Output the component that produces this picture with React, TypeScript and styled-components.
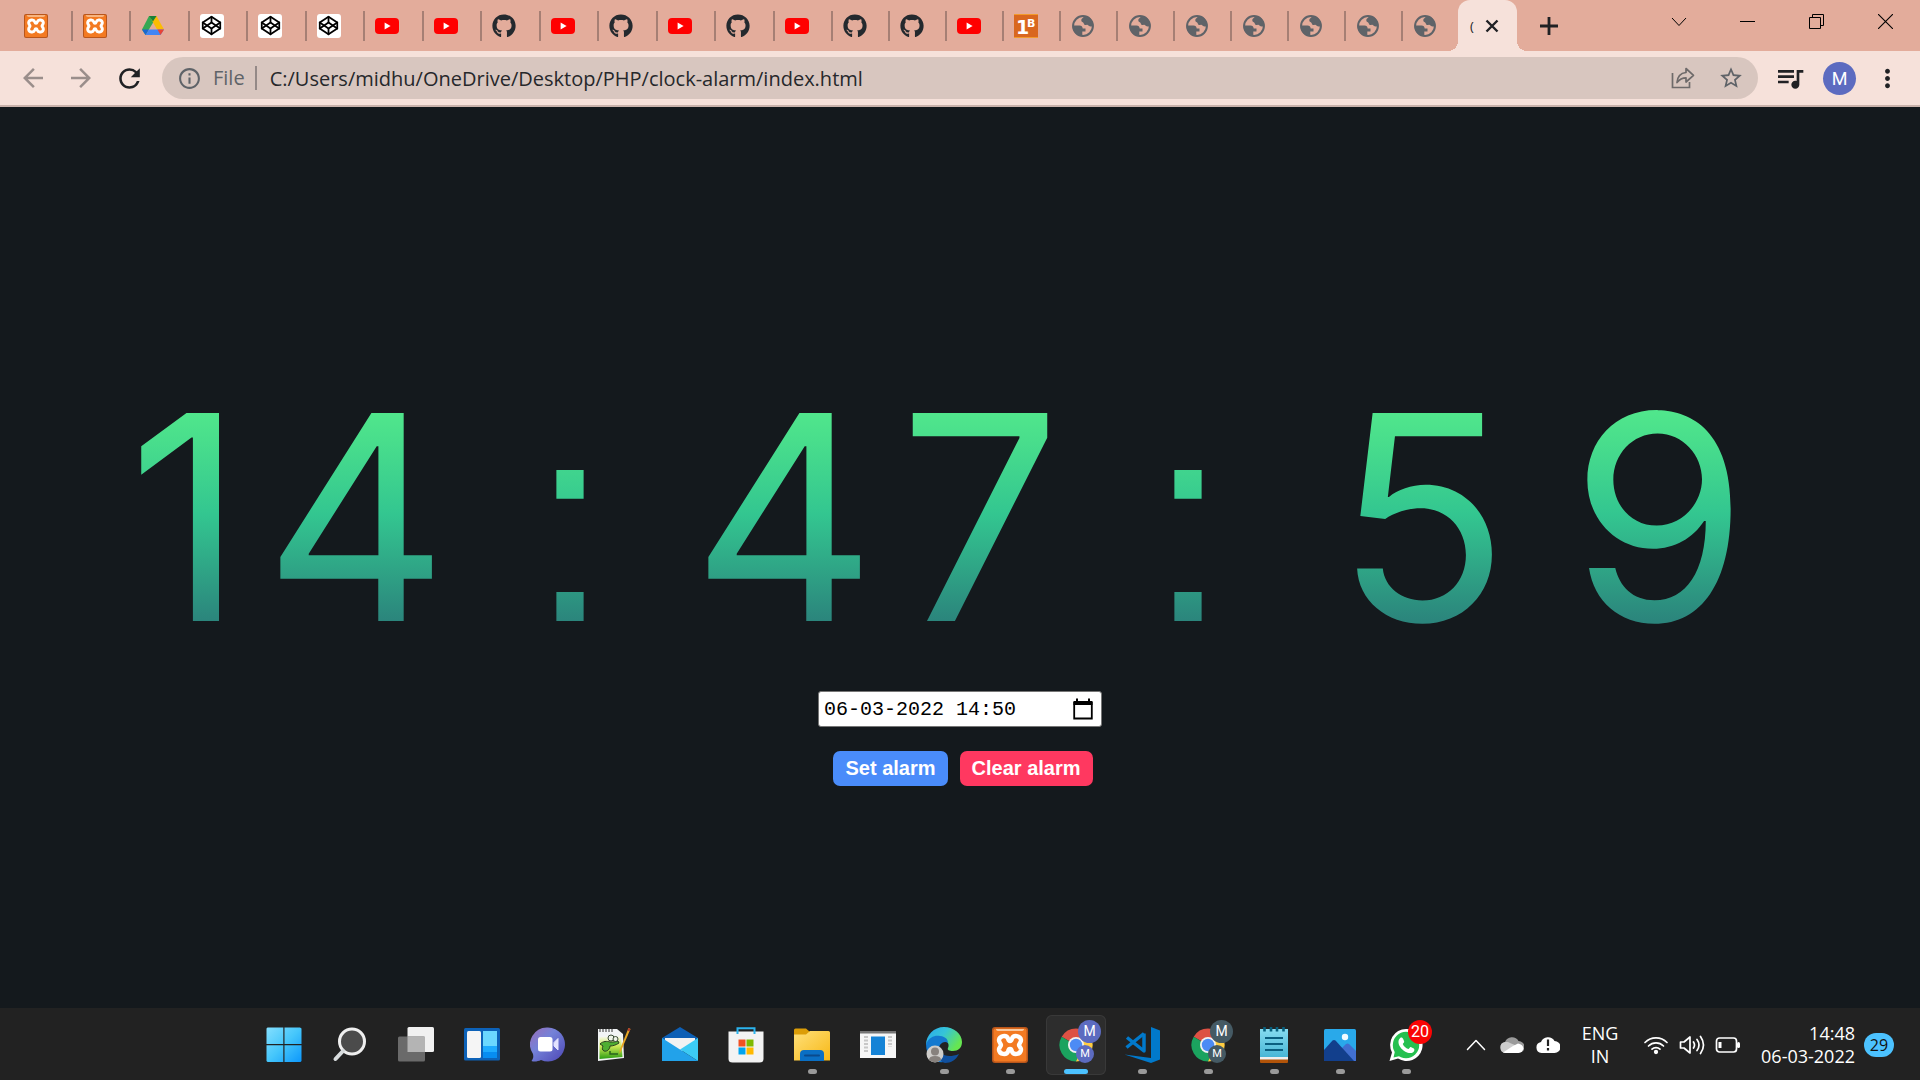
import React from "react";
import styled, { createGlobalStyle, css } from "styled-components";
import { FaGithub } from "react-icons/fa";
import { FiCodepen } from "react-icons/fi";
import { MdArrowBack, MdArrowForward, MdInfoOutline, MdMoreVert, MdRefresh, MdStarOutline, MdQueueMusic } from "react-icons/md";

const uiFont = '"Open Sans", "Noto Sans", sans-serif';

const GlobalStyle = createGlobalStyle`
  *, *::before, *::after { box-sizing: border-box; }
  body { margin: 0; background: #14191d; }
  button, input { font: inherit; color: inherit; border: 0; margin: 0; padding: 0; background: none; }
  svg { display: block; }
`;

const Screen = styled.div`
  min-height: 100vh;
  display: flex;
  flex-direction: column;
  font-family: ${uiFont};
`;

/* ---------- tab strip ---------- */

const TabStrip = styled.nav`
  height: 51px;
  display: flex;
  background: #e3ac9b;
`;

const Tab = styled.button`
  width: 57px;
  height: 51px;
  display: flex;
  align-items: center;
  &::before {
    content: "";
    width: 2px;
    height: 30px;
    margin-right: 10px;
    background: #a67f74;
  }
`;

const FirstTab = styled(Tab)`
  width: 71px;
  padding-left: 24px;
  &::before { display: none; }
`;

const WideTabs = styled.div`
  flex: 0 1 760px;
  display: flex;
  ${Tab} { flex: 1; }
`;

const ActiveTab = styled.div`
  position: relative;
  width: 59px;
  height: 51px;
  display: flex;
  align-items: center;
  gap: 11px;
  padding-left: 12px;
  border-radius: 12px 12px 0 0;
  background: #f6e1da;
  color: #202124;
  &::before, &::after {
    content: "";
    position: absolute;
    bottom: 0;
    width: 10px;
    height: 10px;
  }
  &::before {
    right: 100%;
    background: radial-gradient(circle at 0 0, transparent 10px, #f6e1da 10px);
  }
  &::after {
    left: 100%;
    background: radial-gradient(circle at 100% 0, transparent 10px, #f6e1da 10px);
  }
`;

const TabTitle = styled.span`
  font-size: 13px;
  line-height: 24px;
`;

const PlainButton = styled.button`
  display: flex;
  align-items: center;
  justify-content: center;
`;

const NewTab = styled(PlainButton)`
  width: 46px;
  margin-left: 9px;
  color: #202124;
`;

const WindowControls = styled.div`
  display: flex;
  height: 43px;
  margin-left: auto;
`;

const Caption = styled(PlainButton)`
  width: 69px;
`;

/* ---------- toolbar ---------- */

const Toolbar = styled.header`
  height: 56px;
  display: flex;
  align-items: center;
  padding-left: 9px;
  padding-right: 9px;
  background: #f6e1da;
  border-bottom: 2px solid #c9b2ab;
  color: #202124;
`;

const ToolButton = styled(PlainButton)<{ $dim?: boolean }>`
  width: 48px;
  height: 42px;
  color: ${(p) => (p.$dim ? "#9a8e8b" : "#202124")};
`;

const AddressBar = styled.div`
  flex: 1;
  height: 42px;
  display: flex;
  align-items: center;
  margin-left: 9px;
  margin-right: 8px;
  padding-left: 15px;
  padding-right: 3px;
  border-radius: 21px;
  background: #d8c6bf;
  color: #5f6368;
`;

const Scheme = styled.label`
  margin-left: 11px;
  padding-right: 10px;
  font-size: 20px;
  line-height: 24px;
  border-right: 2px solid #948987;
`;

const Url = styled.input`
  flex: 1;
  min-width: 0;
  margin-left: 13px;
  height: 32px;
  font-size: 20px;
  color: #26282b;
`;

const Avatar = styled.button`
  width: 33px;
  height: 33px;
  margin: 0 7px 0 9px;
  border-radius: 50%;
  background: #5c6bc0;
  color: #fff;
  font-family: Roboto, sans-serif;
  font-size: 18px;
  line-height: 33px;
`;

/* ---------- alarm page ---------- */

const Main = styled.main`
  flex: 1;
  display: flex;
  flex-direction: column;
  align-items: center;
  justify-content: center;
  padding-top: 40px;
`;

const Clock = styled.h1`
  margin: 0;
  padding-right: 28px;
  display: flex;
  align-items: baseline;
  font-family: Inter, "DejaVu Sans", sans-serif;
  font-weight: 400;
  font-size: 286px;
  line-height: 296px;
  color: transparent;
  background: linear-gradient(180deg, #50e68c 15%, #49de8c 24%, #33c690 49%, #2b857c 85%);
  background-clip: text;
  -webkit-background-clip: text;
`;

const Glyph = styled.span<{ $advance: number }>`
  width: ${(p) => p.$advance}px;
  display: flex;
  justify-content: center;
`;

const Separator = styled(Glyph)`
  font-family: "Liberation Sans", Arial, sans-serif;
  line-height: 200px;
`;

const AlarmField = styled.div`
  width: 284px;
  height: 36px;
  display: flex;
  align-items: center;
  margin-top: 26px;
  padding: 0 8px 0 5px;
  border: 1px solid #767676;
  border-radius: 3px;
  background: #fff;
`;

const AlarmInput = styled.input`
  flex: 1;
  min-width: 0;
  font-family: "Liberation Mono", monospace;
  font-size: 20px;
  color: #000;
`;

const Actions = styled.div`
  display: flex;
  gap: 6px;
  margin-top: 24px;
`;

const ActionButton = styled.button<{ $color: string }>`
  height: 35px;
  margin-left: 6px;
  padding: 0 12px;
  border-radius: 7px;
  background: ${(p) => p.$color};
  color: #fff;
  font-family: "Liberation Sans", Arial, sans-serif;
  font-weight: 700;
  font-size: 20px;
`;

/* ---------- taskbar ---------- */

const Taskbar = styled.footer`
  height: 72px;
  display: flex;
  align-items: center;
  justify-content: flex-end;
  padding-top: 2px;
  padding-right: 26px;
  background: #222222;
  color: #fff;
`;

const Apps = styled.div`
  display: flex;
  gap: 6px;
`;

const AppButton = styled.button<{ $state?: "open" | "active" }>`
  position: relative;
  width: 60px;
  height: 60px;
  display: flex;
  align-items: center;
  justify-content: center;
  border-radius: 6px;
  ${(p) =>
    p.$state === "active" &&
    css`
      background: #2d2d2d;
      box-shadow: inset 0 0 0 1px #393939;
    `}
  ${(p) =>
    p.$state &&
    css`
      &::after {
        content: "";
        position: absolute;
        bottom: 1px;
        left: 50%;
        width: ${p.$state === "active" ? 24 : 9}px;
        height: 5px;
        margin-left: ${p.$state === "active" ? -12 : -4}px;
        border-radius: 3px;
        background: ${p.$state === "active" ? "#4cc2ff" : "#9a9a9a"};
      }
    `}
`;

const Badge = styled.span<{ $size: number; $top: number; $left: number; $color: string; $text: number }>`
  position: absolute;
  top: ${(p) => p.$top}px;
  left: ${(p) => p.$left}px;
  width: ${(p) => p.$size}px;
  height: ${(p) => p.$size}px;
  border-radius: 50%;
  background: ${(p) => p.$color};
  color: #fff;
  font-family: Roboto, sans-serif;
  font-size: ${(p) => p.$text}px;
  line-height: ${(p) => p.$size}px;
  text-align: center;
`;

const Tray = styled.div`
  display: flex;
  align-items: center;
  margin-left: 22px;
  font-size: 18px;
  line-height: 23px;
`;

const TrayButton = styled(PlainButton)`
  width: 36px;
  height: 48px;
`;

const Language = styled.button`
  width: 72px;
  padding-right: 4px;
  text-align: center;
`;

const DateTime = styled.button`
  width: 109px;
  text-align: right;
`;

const StackedLine = styled.span`
  display: block;
`;

const Count = styled.span`
  width: 30px;
  height: 24px;
  margin-left: 9px;
  border-radius: 12px;
  background: #4cc2ff;
  color: #111;
  text-align: center;
  font-size: 16px;
  line-height: 24px;
`;

/* ---------- drawings ---------- */

const Xampp = ({ size }: { size: number }) => (
  <svg width={size} height={size} viewBox="0 0 36 36">
    <rect width="36" height="36" rx="3" fill="#b9561b" />
    <rect x="1.500" y="1.500" width="33" height="33" rx="2" fill="#f37a22" />
    <path d="M4 2h28q0 2-3 2H7Q4 4 4 2Z" fill="#f9c9a0" />
    <path
      d="M18 14C16.500 14 16.500 13 16 11.500 14.500 7.500 7.500 8.500 7 13c-.2 2.500 2 3.500 2 5s-2.200 2.500-2 5c.5 4.500 7.500 5.500 9 1.500.5-1.500.5-2.500 2-2.500s1.500 1 2 2.500c1.500 4 8.500 3 9-1.500.2-2.500-2-3.500-2-5s2.200-2.500 2-5c-.5-4.500-7.500-5.500-9-1.500-.5 1.500-.5 2.500-2 2.500Z"
      fill="none" stroke="#fff" strokeWidth="4.400" strokeLinejoin="round"
    />
  </svg>
);

const Drive = () => (
  <svg width="24" height="24" viewBox="0 0 24 24">
    <path d="M8 2h4l2 3.500L4.500 21 1 15.500Z" fill="#34a853" />
    <path d="M15.500 2 23 15.500h-7L8.500 2Z" fill="#fbbc04" />
    <path d="M8 2h7.500L12 7.500Z" fill="#188038" />
    <path d="M8 15.500h15L19.500 21H4.500Z" fill="#4285f4" />
    <path d="M1 15.500h6.800L4.500 21Z" fill="#1967d2" />
    <path d="M16.500 15.500H23L19.500 21Z" fill="#ea4335" />
  </svg>
);

const CodepenTile = styled.span`
  width: 24px;
  height: 24px;
  display: flex;
  align-items: center;
  justify-content: center;
  border-radius: 3px;
  background: #fff;
  color: #000;
`;

const Codepen = () => (
  <CodepenTile><FiCodepen size={21} strokeWidth={2} /></CodepenTile>
);

const YouTube = () => (
  <svg width="24" height="24" viewBox="0 0 24 24">
    <rect y="4" width="24" height="16" rx="4" fill="#f00" />
    <path d="M9.600 8.500v7l6-3.500Z" fill="#fff" />
  </svg>
);

const GitHub = () => <FaGithub size={24} color="#24292e" />;

const OneB = () => (
  <svg width="24" height="24" viewBox="0 0 24 24">
    <rect width="24" height="24" fill="#d9671f" />
    <path d="M0 .5h24M0 23.500h24" stroke="#f39a2a" />
    <text x="2" y="19.500" fontFamily="DejaVu Sans" fontWeight="700" fontSize="19" fill="#fff">1</text>
    <text x="13" y="13" fontFamily="DejaVu Sans" fontWeight="700" fontSize="11" fill="#fff">B</text>
  </svg>
);

const Globe = () => (
  <svg width="24" height="24" viewBox="0 0 24 24">
    <circle cx="12" cy="12" r="9.900" fill="none" stroke="#5f6368" strokeWidth="2" />
    <path d="M13 2c-.7 2.500-2.700 2-2.700 4.500 0 1.800 2 1.200 2.500 3 .4 1.600 1.700 1.700 3 1.300 1.300-.4 2 1.700 4 1.700h2.500C22.500 6 18 1.500 13 2Z" fill="#5f6368" />
    <path d="M1.500 11.500h7c2 0 3 1.300 3.200 3h2.800v3h-3.200v4.800C5.500 22 1.500 17.500 1.500 11.500Z" fill="#5f6368" />
  </svg>
);

const Share = () => (
  <svg width="24" height="24" viewBox="0 0 24 24" fill="none" stroke="#6e6a6a" strokeWidth="1.700">
    <path d="M1.500 7v14.500h17V16" />
    <path d="M6 16.500C6.500 10.500 10 7 15 6.500V2.500l7.500 6.800L15 16v-4.200c-4 0-6.500 1.500-9 4.700Z" strokeLinejoin="round" />
  </svg>
);

const WindowsLogo = () => (
  <svg width="36" height="36" viewBox="0 0 36 36">
    <defs>
      <linearGradient id="win" x1="0" y1="0" x2="36" y2="36" gradientUnits="userSpaceOnUse">
        <stop stopColor="#86e0ff" /><stop offset=".5" stopColor="#45c6fb" /><stop offset="1" stopColor="#0a95fb" />
      </linearGradient>
    </defs>
    <path fill="url(#win)" d="M1.500 .5h15.800v16.500H.5V1.500ZM18.500 .5H34l1.500 1v15.500h-17ZM.5 18.300h16.800V35H1.500l-1-1ZM18.500 18.300h17V34l-1 1h-16Z" />
  </svg>
);

const Search = () => (
  <svg width="36" height="36" viewBox="0 0 36 36">
    <circle cx="20" cy="14.500" r="12.500" fill="#4b4b4b" stroke="#efefef" strokeWidth="3" />
    <path d="m11 24-7.500 8" stroke="#d8dcde" strokeWidth="4" strokeLinecap="round" />
  </svg>
);

const TaskView = () => (
  <svg width="36" height="36" viewBox="0 0 36 36">
    <rect x="9.500" y="0" width="26.500" height="25" rx="1.500" fill="#f1f1f1" />
    <rect x="0" y="9.500" width="27" height="25" rx="1.500" fill="#6a6a6a" />
    <path d="M9.500 9.500H27V25H9.500Z" fill="#b4b4b4" />
  </svg>
);

const Widgets = () => (
  <svg width="36" height="36" viewBox="0 0 36 36">
    <rect y="1" width="36" height="32.500" rx="1.500" fill="#0d62b8" />
    <rect x="3" y="4" width="14" height="27" rx="1.500" fill="#f5f5f5" />
    <path d="M19 4h14v15H19Z" fill="#6bd8ff" />
    <path d="M19 19h14v6H19Z" fill="#1eabff" />
    <path d="M19 25h14v6H19Z" fill="#078df2" />
  </svg>
);

const Chat = () => (
  <svg width="36" height="36" viewBox="0 0 36 36">
    <defs>
      <linearGradient id="chat" x1="0" y1="0" x2="1" y2="1">
        <stop stopColor="#9a6cb8" /><stop offset=".4" stopColor="#7482d8" /><stop offset="1" stopColor="#4d46b5" />
      </linearGradient>
    </defs>
    <path d="M18 .5a17 17 0 1 1-7 32.500C8 34.500 4 35 1.500 34c2-2.500 2-4.500 1.500-7A17 17 0 0 1 18 .5Z" fill="url(#chat)" />
    <rect x="8" y="10" width="14.500" height="14.500" rx="2.500" fill="#fff" />
    <path d="m24 15.500 4-4v11.500l-4-4Z" fill="#e4e4ff" stroke="#e4e4ff" strokeLinejoin="round" />
  </svg>
);

const NotepadPlus = () => (
  <svg width="36" height="36" viewBox="0 0 36 36">
    <defs>
      <linearGradient id="npp" x1="0" y1="0" x2="0" y2="1">
        <stop stopColor="#f8f8f2" /><stop offset=".45" stopColor="#cdea55" /><stop offset="1" stopColor="#2b9c13" />
      </linearGradient>
    </defs>
    <path d="M2 2h19l6 5 1 24L2 34Z" fill="#f2f4f5" />
    <path d="M3.500 10 25 9l1.500 21-23 2Z" fill="url(#npp)" />
    <path d="M4 2v3m3-3v3m3-3v3m3-3v3m3-3v3" stroke="#333" strokeWidth="1" />
    <path d="M4 17c3-3 7-3 10-2 3 0 6 0 8-1l1 2c-3 2-6 3-9 3 0 3-3 6-6 5-2-1-2-3-1-5-1-1-2-1-3-2Z" fill="#4fae32" stroke="#29421e" />
    <circle cx="15" cy="11" r="3" fill="#eef3e8" stroke="#3a4b35" />
    <circle cx="19.500" cy="12" r="2.500" fill="#eef3e8" stroke="#3a4b35" />
    <path d="M14 24v3h8" fill="none" stroke="#29621e" strokeWidth="1.500" />
    <path d="M34.500 2 25 24l-1.500 3 .2-4L32.500 1Z" fill="#e8a623" />
    <path d="m32.500 1 2 1-1 2.500-2-1Z" fill="#b33a2c" />
  </svg>
);

const Mail = () => (
  <svg width="36" height="36" viewBox="0 0 36 36">
    <path d="M0 11 18 0l18 11v6H0Z" fill="#0d5fb5" />
    <path d="M3 11h30v9L18 25 3 20Z" fill="#f2f2f2" />
    <path d="M36 11 18 22.500 36 34Z" fill="#3ccbf4" />
    <path d="M0 11 36 34H0Z" fill="#22a2ea" />
  </svg>
);

const Store = () => (
  <svg width="36" height="36" viewBox="0 0 36 36">
    <path d="M.5 4.500h35V32q0 3.500-4 3.500H4.500q-4 0-4-3.500Z" fill="#f3f3f3" />
    <path d="M9.500 7V1.300h17V7" fill="none" stroke="#2bb4ee" strokeWidth="2" />
    <path d="M10.500 12.500h7v7h-7Z" fill="#f25022" />
    <path d="M18.500 12.500h7v7h-7Z" fill="#7fba00" />
    <path d="M10.500 20.500h7v7h-7Z" fill="#00a4ef" />
    <path d="M18.500 20.500h7v7h-7Z" fill="#ffb900" />
  </svg>
);

const Explorer = () => (
  <svg width="36" height="36" viewBox="0 0 36 36">
    <defs>
      <linearGradient id="folder" x1="0" y1="0" x2="1" y2="1">
        <stop stopColor="#ffe07a" /><stop offset="1" stopColor="#f7b816" />
      </linearGradient>
    </defs>
    <path d="M0 3q0-1.500 1.500-1.500H12L16 5v6H0Z" fill="#dc9d07" />
    <path d="M0 7.500h12L16 4h18.500Q36 4 36 5.500v28H0Z" fill="url(#folder)" />
    <path d="M6 34V27q0-4 4-4h16q4 0 4 4v7Z" fill="#0a6fc4" />
    <path d="M11 28.500h14" stroke="#0a4a8c" strokeWidth="2" strokeLinecap="round" />
  </svg>
);

const RunWindow = () => (
  <svg width="36" height="36" viewBox="0 0 36 36">
    <path d="M0 4h36v27H0Z" fill="#f6f6f6" />
    <path d="M0 4h36v2.500H0Z" fill="#757575" />
    <rect x="11" y="9.500" width="14" height="18.500" fill="#1583d6" />
    <path d="M6 9v17M30 9v11" stroke="#c8c8c8" strokeWidth="4" strokeDasharray="2 1.500" />
  </svg>
);

const Edge = () => (
  <svg width="36" height="36" viewBox="0 0 36 36">
    <defs>
      <linearGradient id="edge" x1="0" y1="0" x2="1" y2=".5">
        <stop stopColor="#2aa7ee" /><stop offset=".5" stopColor="#35c4d8" /><stop offset="1" stopColor="#66e651" />
      </linearGradient>
    </defs>
    <path d="M0 18C0 8 8 0 18 0s18 7 18 15c0 6-4 9-9 9-4 0-6-1-5-3 2-4-1-8-6-8-7 0-13 5-16 5Z" fill="url(#edge)" />
    <path d="M0 17C3 10 9 8 14 9c6 .5 8 4 8 7-4-3-10 1-9 8 1 6 6 9 12 8-9 7-25 3-25-15Z" fill="#1479cf" />
    <path d="M13 20c0 7 7 12 20 7-3 6-8 9-14 9-8-2-10-11-6-16Z" fill="#10509f" />
    <circle cx="9" cy="27" r="8.500" fill="#cfcdca" />
    <circle cx="9" cy="24.500" r="4" fill="#87817d" />
    <path d="M3 33q0-4 6-4t6 4q-6 4.500-12 0Z" fill="#87817d" />
  </svg>
);

const Chrome = () => (
  <svg width="36" height="36" viewBox="0 0 36 36">
    <path d="M18 18 3.700 9.700A16.500 16.500 0 0 1 32.300 9.700L18 18Z" fill="#dd5144" />
    <path d="M18 18 32.300 9.700A16.500 16.500 0 0 1 18 34.500Z" fill="#ffcd42" />
    <path d="M3.700 9.700A16.500 16.500 0 0 0 18 34.500L24 22Z" fill="#1ba35f" />
    <circle cx="18" cy="18" r="8" fill="#f1f1f1" />
    <circle cx="18" cy="18" r="6.200" fill="#4c8bf5" />
  </svg>
);

const VsCode = () => (
  <svg width="36" height="36" viewBox="0 0 36 36">
    <path d="m27 0 9 3.500v29L27 36 .5 27.500 27 31Z" fill="#0179cb" />
    <path d="M20 6.500v17.500L3 10.500" fill="none" stroke="#0179cb" strokeWidth="3.500" strokeLinejoin="round" />
    <path d="M20 6.500 2.500 20.500" fill="none" stroke="#0179cb" strokeWidth="3.500" />
  </svg>
);

const Notepad = () => (
  <svg width="36" height="36" viewBox="0 0 36 36">
    <defs>
      <linearGradient id="pad" x1="0" y1="0" x2="0" y2="1">
        <stop stopColor="#86dcf0" /><stop offset="1" stopColor="#49b6d6" />
      </linearGradient>
    </defs>
    <rect x="4" y="28" width="28" height="8" rx="1" fill="#b25409" />
    <path d="M4 28h28v4.500H4Z" fill="#eee" />
    <path d="M4 2h28v28H4Z" fill="url(#pad)" />
    <path d="M8.500 0v4.500m6.500-4.500v4.500M21 0v4.500M27.500 0v4.500" stroke="#075f7d" strokeWidth="2.600" />
    <path d="M9 11h18M9 17h18M9 23h18" stroke="#0a5f80" strokeWidth="2" />
  </svg>
);

const Photos = () => (
  <svg width="36" height="36" viewBox="0 0 36 36">
    <rect x="2" y="2" width="32" height="32" rx="1.500" fill="#29a9ea" />
    <path d="m18 23 6-6q1.500-1 3 0l7 7v10H18Z" fill="#416fd0" />
    <path d="m2 23 8.500-9.500q1.500-1 3 0L32 34H2Z" fill="#123f8c" />
    <circle cx="23" cy="10" r="3.200" fill="#f1fbff" />
  </svg>
);

const WhatsApp = () => (
  <svg width="36" height="36" viewBox="0 0 36 36">
    <path d="M18 2a16 16 0 1 1-8 29.500L1.500 34 4 25.500A16 16 0 0 1 18 2Z" fill="#fff" />
    <circle cx="18" cy="18" r="13.200" fill="#25c04f" />
    <path d="M7 24 5.500 30.500 12 29Z" fill="#25c04f" />
    <path d="M11 12.500c1.500-3 3.500-2.500 4.200-.5l1 2.500c.2 1-1.400 2-1.400 2.500 1 2.500 3 4 5.500 5 .7.100 1.700-2.200 2.500-2l3 1.400c1 .6.800 3-1 4.100C18.500 28.500 8 19 11 12.500Z" fill="#fff" />
  </svg>
);

const Cloud = ({ alert }: { alert?: boolean }) => (
  <svg width="24" height="18" viewBox="0 0 24 18">
    <path d="M5.500 17a5.500 5.500 0 0 1-.5-10.900A7.500 7.500 0 0 1 18.500 5 6 6 0 0 1 18.500 17Z" fill={alert ? "#fff" : "#9b9b9b"} />
    {alert ? (
      <path d="M12 3.500v6.500m0 2v2.500" stroke="#222" strokeWidth="2.200" />
    ) : (
      <>
        <path d="M5.500 17A5.500 5.500 0 0 1 5 6.100c2-.5 4 0 5.500 1.200L20 11l-8 6Z" fill="#cecece" />
        <path d="M3 16.500 13 10l5-2.500c7 1 7 8.500.5 9.500h-13Z" fill="#fff" />
      </>
    )}
  </svg>
);

const lines = { fill: "none", stroke: "#fff", strokeWidth: 1.7, strokeLinecap: "round" as const, strokeLinejoin: "round" as const };

const Wifi = () => (
  <svg width="26" height="20" viewBox="0 0 26 20" {...lines}>
    <path d="M2 7.500a15.500 15.500 0 0 1 22 0M5.500 11a10.600 10.600 0 0 1 15 0M9 14.200a5.700 5.700 0 0 1 8 0" />
    <circle cx="13" cy="17" r="1.300" fill="#fff" />
  </svg>
);

const Speaker = () => (
  <svg width="26" height="22" viewBox="0 0 26 22" {...lines}>
    <path d="M1.500 8H5l6-5v16l-6-5H1.500ZM14.500 8q2 3 0 6M18 5.500q4 5.500 0 11M21.500 2.500q6 8.500 0 17" />
  </svg>
);

const Battery = () => (
  <svg width="26" height="20" viewBox="0 0 26 20" {...lines}>
    <rect x="1.500" y="3" width="20" height="14" rx="3" />
    <path d="M5 7v6" strokeWidth="3" strokeLinecap="butt" />
    <path d="M23.500 8.500v3" strokeWidth="3" />
  </svg>
);

const Calendar = () => (
  <svg width="20" height="22" viewBox="0 0 20 22">
    <path d="M1.200 5h17.600v15.500H1.200Z" fill="none" stroke="#000" strokeWidth="1.800" />
    <path d="M.5 3h19v4H.5ZM3 .5h2V4H3ZM15 .5h2V4h-2Z" fill="#000" />
  </svg>
);

/* ---------- data ---------- */

const favicons = {
  drive: <Drive />,
  codepen: <Codepen />,
  xampp: <Xampp size={24} />,
  youtube: <YouTube />,
  github: <GitHub />,
  oneb: <OneB />,
  globe: <Globe />,
};
type Site = keyof typeof favicons;

const wideTabs: Site[] = ["xampp", "drive", "codepen", "codepen", "codepen", "youtube", "youtube", "github", "youtube", "github", "youtube", "github", "youtube"];
const narrowTabs: Site[] = ["github", "github", "youtube", "oneb", "globe", "globe", "globe", "globe", "globe", "globe", "globe"];

const advances: Record<string, number> = { "1": 138, "4": 202, "7": 190, "5": 242, "9": 232, ":": 226 };

type App = { name: string; icon: React.ReactNode; state?: "open" | "active" };

const chromeWithProfile = (color: string) => (
  <>
    <Chrome />
    <Badge $size={23} $top={5} $left={32} $color={color} $text={14}>M</Badge>
    <Badge $size={18} $top={30} $left={30} $color={color} $text={11}>M</Badge>
  </>
);

const apps: App[] = [
  { name: "Start", icon: <WindowsLogo /> },
  { name: "Search", icon: <Search /> },
  { name: "Task view", icon: <TaskView /> },
  { name: "Widgets", icon: <Widgets /> },
  { name: "Chat", icon: <Chat /> },
  { name: "Notepad++", icon: <NotepadPlus /> },
  { name: "Mail", icon: <Mail /> },
  { name: "Store", icon: <Store /> },
  { name: "File Explorer", icon: <Explorer />, state: "open" },
  { name: "Run", icon: <RunWindow /> },
  { name: "Edge", icon: <Edge />, state: "open" },
  { name: "XAMPP", icon: <Xampp size={36} />, state: "open" },
  { name: "Chrome", icon: chromeWithProfile("#5c6bc0"), state: "active" },
  { name: "Visual Studio Code", icon: <VsCode />, state: "open" },
  { name: "Chrome, second profile", icon: chromeWithProfile("#455a64"), state: "open" },
  { name: "Notepad", icon: <Notepad />, state: "open" },
  { name: "Photos", icon: <Photos />, state: "open" },
  {
    name: "WhatsApp",
    icon: (
      <>
        <WhatsApp />
        <Badge $size={24} $top={5} $left={32} $color="#fa0505" $text={16}>20</Badge>
      </>
    ),
    state: "open",
  },
];

export default function App() {
  return (
    <Screen>
      <GlobalStyle />
      <TabStrip aria-label="Tabs">
        <FirstTab aria-label="xampp"><Xampp size={24} /></FirstTab>
        <WideTabs>
          {wideTabs.map((site, i) => (
            <Tab key={i} aria-label={site}>{favicons[site]}</Tab>
          ))}
        </WideTabs>
        {narrowTabs.map((site, i) => (
          <Tab key={i} aria-label={site}>{favicons[site]}</Tab>
        ))}
        <ActiveTab>
          <TabTitle>(</TabTitle>
          <PlainButton aria-label="Close tab">
            <svg width="14" height="14" viewBox="0 0 14 14" stroke="currentColor" strokeWidth="2.400"><path d="m1.500 1.500 11 11M12.500 1.500l-11 11" /></svg>
          </PlainButton>
        </ActiveTab>
        <NewTab aria-label="New tab">
          <svg width="18" height="18" viewBox="0 0 18 18" stroke="currentColor" strokeWidth="2.800"><path d="M9 0v18M0 9h18" /></svg>
        </NewTab>
        <WindowControls>
          <Caption aria-label="Search tabs">
            <svg width="16" height="10" viewBox="0 0 16 10" fill="none" stroke="#000"><path d="m1 1 7 7.500L15 1" /></svg>
          </Caption>
          <Caption aria-label="Minimise">
            <svg width="15" height="1" viewBox="0 0 15 1"><path d="M0 0h15v1H0Z" /></svg>
          </Caption>
          <Caption aria-label="Restore">
            <svg width="15" height="15" viewBox="0 0 15 15" fill="none" stroke="#000"><path d="M.5 3.500h11v11H.5ZM3.500 3.500v-3h11v11h-3" /></svg>
          </Caption>
          <Caption aria-label="Close">
            <svg width="15" height="15" viewBox="0 0 15 15" stroke="#000" strokeWidth="1.100"><path d="m0 0 15 15M15 0 0 15" /></svg>
          </Caption>
        </WindowControls>
      </TabStrip>

      <Toolbar>
        <ToolButton $dim aria-label="Back"><MdArrowBack size={30} /></ToolButton>
        <ToolButton $dim aria-label="Forward"><MdArrowForward size={30} /></ToolButton>
        <ToolButton aria-label="Reload"><MdRefresh size={31} /></ToolButton>
        <AddressBar>
          <MdInfoOutline size={25} />
          <Scheme htmlFor="url">File</Scheme>
          <Url id="url" defaultValue="C:/Users/midhu/OneDrive/Desktop/PHP/clock-alarm/index.html" />
          <ToolButton aria-label="Share"><Share /></ToolButton>
          <ToolButton aria-label="Bookmark"><MdStarOutline size={26} color="#5f6368" /></ToolButton>
        </AddressBar>
        <ToolButton aria-label="Media"><MdQueueMusic size={32} /></ToolButton>
        <Avatar>M</Avatar>
        <ToolButton aria-label="Menu"><MdMoreVert size={29} /></ToolButton>
      </Toolbar>

      <Main>
        <Clock>
          {[..."14:47:59"].map((char, i) => {
            const Cell = char === ":" ? Separator : Glyph;
            return <Cell key={i} $advance={advances[char]}>{char}</Cell>;
          })}
        </Clock>
        <AlarmField>
          <AlarmInput aria-label="Alarm time" defaultValue="06-03-2022 14:50" />
          <PlainButton aria-label="Open calendar"><Calendar /></PlainButton>
        </AlarmField>
        <Actions>
          <ActionButton $color="#4a8cfa">Set alarm</ActionButton>
          <ActionButton $color="#ff3860">Clear alarm</ActionButton>
        </Actions>
      </Main>

      <Taskbar>
        <Apps>
          {apps.map((app) => (
            <AppButton key={app.name} aria-label={app.name} $state={app.state}>{app.icon}</AppButton>
          ))}
        </Apps>
        <Tray>
          <TrayButton aria-label="Hidden icons">
            <svg width="20" height="12" viewBox="0 0 20 12" {...lines} strokeWidth="1.500"><path d="m1.500 10.500 8.500-9 8.500 9" /></svg>
          </TrayButton>
          <TrayButton aria-label="OneDrive"><Cloud /></TrayButton>
          <TrayButton aria-label="OneDrive alert"><Cloud alert /></TrayButton>
          <Language>
            <StackedLine>ENG</StackedLine>
            <StackedLine>IN</StackedLine>
          </Language>
          <TrayButton aria-label="Network"><Wifi /></TrayButton>
          <TrayButton aria-label="Volume"><Speaker /></TrayButton>
          <TrayButton aria-label="Battery"><Battery /></TrayButton>
          <DateTime>
            <StackedLine>14:48</StackedLine>
            <StackedLine>06-03-2022</StackedLine>
          </DateTime>
          <Count>29</Count>
        </Tray>
      </Taskbar>
    </Screen>
  );
}
